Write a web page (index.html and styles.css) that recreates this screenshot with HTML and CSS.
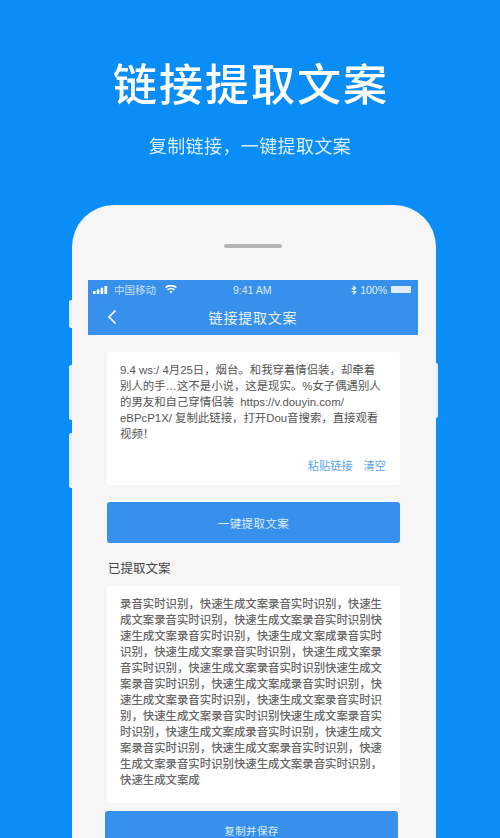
FILE: index.html
```html
<!DOCTYPE html>
<html lang="zh-CN">
<head>
<meta charset="utf-8">
<title>链接提取文案</title>
<link rel="stylesheet" href="styles.css">
</head>
<body>
<main class="page">
  <header class="promo">
    <h1 class="promo-title">链接提取文案</h1>
    <p class="promo-sub">复制链接，一键提取文案</p>
  </header>
  <section class="phone">
    <span class="side side-a"></span>
    <span class="side side-b"></span>
    <span class="side side-c"></span>
    <span class="side side-d"></span>
    <div class="speaker"></div>
    <div class="screen">
      <div class="appbar">
        <div class="status">
          <div class="status-left">
            <svg class="signal" viewBox="0 0 15 8" width="15" height="8"><rect x="0" y="5" width="2.6" height="3" rx=".6"/><rect x="3.800" y="3.600" width="2.600" height="4.400" rx=".6"/><rect x="7.600" y="1.800" width="2.600" height="6.200" rx=".6"/><rect x="11.400" y="0" width="2.800" height="8" rx=".6"/></svg>
            <span>中国移动</span>
            <svg class="wifi" viewBox="0 0 12 9" width="12" height="9"><path d="M6 8.600 4.300 6.700a2.600 2.600 0 0 1 3.400 0zM3.200 5.500 2 4.200a6 6 0 0 1 8 0L8.800 5.500a4.200 4.200 0 0 0-5.600 0zM1.200 3.300 0 2a9 9 0 0 1 12 0l-1.200 1.300a7.300 7.300 0 0 0-9.600 0z"/></svg>
          </div>
          <div class="status-time">9:41 AM</div>
          <div class="status-right">
            <svg class="bt" viewBox="0 0 7 11" width="6" height="10"><path d="M1 3 5.500 7.500 3.400 9.800V1.200L5.500 3.500 1 8" fill="none" stroke="#fff" stroke-width="1.400"/></svg>
            <span>100%</span>
            <span class="battery"></span>
          </div>
        </div>
        <div class="nav">
          <svg class="back" viewBox="0 0 10 16" width="10" height="16"><path d="M8.500 1.500 2 8l6.500 6.500" fill="none" stroke="#fff" stroke-width="1.700"/></svg>
          <div class="nav-title">链接提取文案</div>
        </div>
      </div>
      <div class="content">
        <div class="card input-card">
          <p class="input-text">9.4 ws:/ 4月25日，烟台。和我穿着情侣装，却牵着<br>别人的手…这不是小说，这是现实。%女子偶遇别人<br>的男友和自己穿情侣装&nbsp; https://v.douyin.com/<br>eBPcP1X/ 复制此链接，打开Dou音搜索，直接观看<br>视频！</p>
          <div class="links"><a>粘贴链接</a><a>清空</a></div>
        </div>
        <button class="btn btn-extract">一键提取文案</button>
        <h2 class="section-title">已提取文案</h2>
        <div class="card result-card">
          <p class="result-text">录音实时识别，快速生成文案录音实时识别，快速生<br>成文案录音实时识别，快速生成文案录音实时识别快<br>速生成文案录音实时识别，快速生成文案成录音实时<br>识别，快速生成文案录音实时识别，快速生成文案录<br>音实时识别，快速生成文案录音实时识别快速生成文<br>案录音实时识别，快速生成文案成录音实时识别，快<br>速生成文案录音实时识别，快速生成文案录音实时识<br>别，快速生成文案录音实时识别快速生成文案录音实<br>时识别，快速生成文案成录音实时识别，快速生成文<br>案录音实时识别，快速生成文案录音实时识别，快速<br>生成文案录音实时识别快速生成文案录音实时识别，<br>快速生成文案成</p>
        </div>
        <button class="btn btn-save">复制并保存</button>
      </div>
    </div>
  </section>
</main>
</body>
</html>
```
FILE: styles.css
```css
* { box-sizing: border-box; }
html, body { margin: 0; padding: 0; }
body {
  width: 500px;
  height: 838px;
  overflow: hidden;
  background: #0b8df7;
  font-family: "Noto Sans CJK SC", "Liberation Sans", sans-serif;
}
.page { display: flex; flex-direction: column; align-items: center; height: 838px; overflow: hidden; filter: blur(.35px); }
.promo { text-align: center; color: #fff; padding-top: 52px; height: 205px; flex: none; }
.promo-title { margin: 0; font-size: 44px; line-height: 60px; font-weight: 500; letter-spacing: 2px; margin-right: -2px; }
.promo-sub { margin: 20px 0 0; font-size: 18px; line-height: 26px; letter-spacing: .4px; font-weight: 400; opacity: .85; }

.phone {
  position: relative;
  flex: none;
  width: 364px;
  height: 700px;
  margin-left: 8px;
  background: #f6f6f6;
  border-radius: 42px 42px 0 0;
  padding: 0 18px 0 16px;
}
.side { position: absolute; width: 3px; background: #e9eef3; }
.side-a { left: -3px; top: 95px; height: 28px; border-radius: 2px 0 0 2px; }
.side-b { left: -3px; top: 160px; height: 55px; border-radius: 2px 0 0 2px; }
.side-c { left: -3px; top: 228px; height: 55px; border-radius: 2px 0 0 2px; }
.side-d { right: -2px; width: 2px; top: 158px; height: 55px; border-radius: 0 2px 2px 0; }
.speaker { width: 58px; height: 4px; margin: 39px auto 0; background: #b5b5b5; border-radius: 2px; }
.screen { margin-top: 32px; width: 330px; }
.appbar { height: 55px; background: #3791ec; color: #fff; }
.status { display: flex; justify-content: space-between; align-items: center; height: 19px; padding: 0 7px 0 5px; font-size: 10.500px; font-family: "Liberation Sans", "Noto Sans CJK SC", sans-serif; position: relative; }
.status-left { display: flex; align-items: center; gap: 6px; }
.status-left span { opacity: .7; }
.signal, .wifi { fill: #fff; }
.wifi { margin-left: 3px; }
.status-time { position: absolute; left: 145px; opacity: .8; }
.status-right { display: flex; align-items: center; gap: 3px; opacity: .85; }
.battery { width: 20px; height: 7px; background: #fff; border-radius: 1px; margin-left: 1px; }
.nav { display: flex; align-items: center; height: 36px; position: relative; }
.back { margin-left: 19px; }
.nav-title { position: absolute; left: 0; right: 0; text-align: center; font-size: 14px; letter-spacing: .8px; opacity: .9; }
.content { padding: 17px 18px 0 19px; }
.card { background: #fff; border-radius: 3px; }
.input-card { height: 133px; padding: 10px 18px 0 13px; position: relative; }
.input-text, .result-text { margin: 0; color: #555; font-size: 11.400px; line-height: 16px; }
.input-text { white-space: nowrap; font-family: "Liberation Sans", "Noto Sans CJK SC", sans-serif; }
.links { display: flex; justify-content: flex-end; gap: 11px; position: absolute; right: 14px; bottom: 12px; color: #5aa5ee; font-size: 11.200px; line-height: 16px; }
.btn { display: block; width: 293px; border: 0; background: #3791ec; color: #fff; font-family: inherit; border-radius: 3px; padding: 0; text-align: center; }
.btn-extract { height: 41px; margin-top: 17px; font-size: 11.500px; letter-spacing: .4px; color: #dcecfb; }
.section-title { margin: 16px 0 0 1px; font-size: 12.500px; line-height: 18px; font-weight: 400; color: #444; }
.result-card { height: 217px; margin-top: 9px; padding: 9px 18px 0 13px; }
.result-text { white-space: nowrap; font-weight: 500; color: #666; }
.btn-save { margin: 8px 0 0 -2px; height: 40px; font-size: 10.500px; letter-spacing: .4px; color: #dcecfb; line-height: 40px; }
```
